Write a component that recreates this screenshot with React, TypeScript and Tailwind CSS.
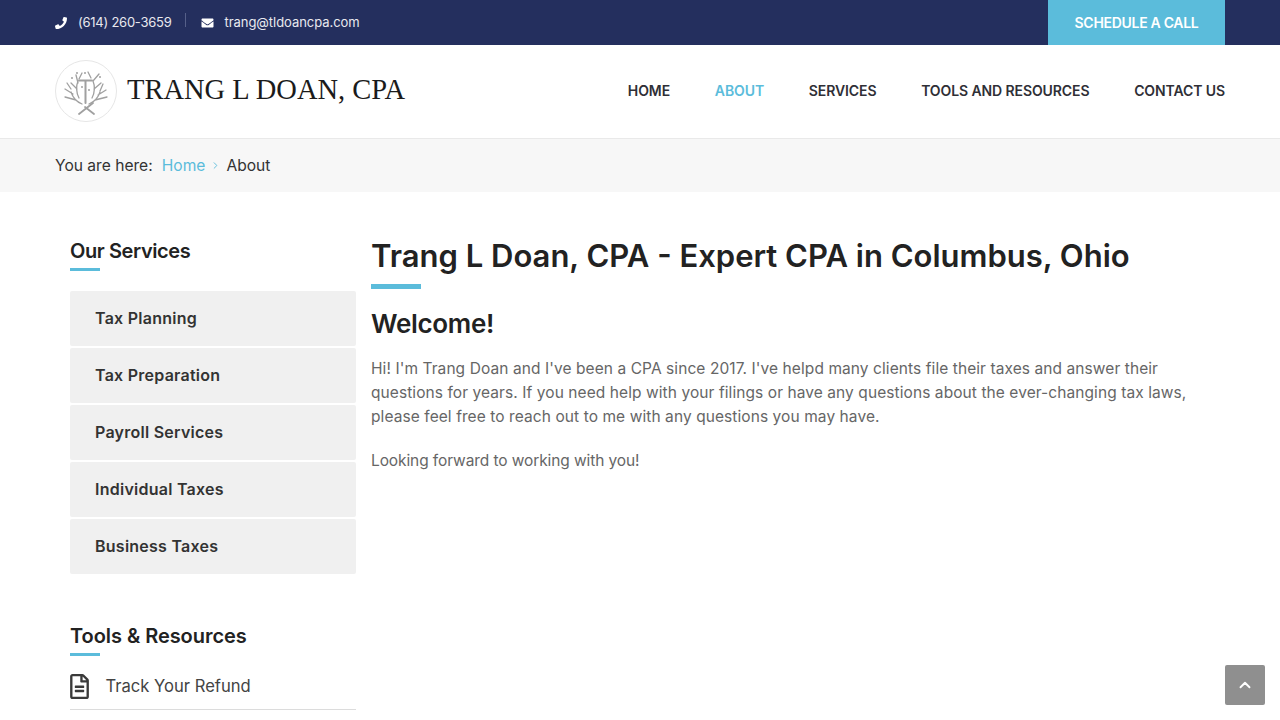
import React from 'react';
import { ChevronUp, ChevronRight } from 'lucide-react';
import { FaPhone, FaEnvelope, FaRegFileAlt } from 'react-icons/fa';

const navLinks = ['HOME', 'ABOUT', 'SERVICES', 'TOOLS AND RESOURCES', 'CONTACT US'];
const services = ['Tax Planning', 'Tax Preparation', 'Payroll Services', 'Individual Taxes', 'Business Taxes'];

const Logo = () => (
  <div className="flex items-center gap-[10px]">
    <svg width="62" height="62" viewBox="0 0 62 62" fill="none">
      <circle cx="31" cy="31" r="30.5" stroke="#e6e6e6" />
      <g stroke="#a0a0a0" strokeWidth="1.3" strokeLinecap="round">
        <path d="M24 20.5h13M30.5 21v22" strokeWidth="2" />
        <path d="M24 54l14-11M39 54l-9-7" strokeWidth="1.8" />
        <path d="M27 44c-5-2-9-6-11-12M21 40l-11-3M18 34l-8-5M16 29l-4-6M24 38c-3-6-3-12-1-17M22 29l-6-6M23 23l-2-8M24 19l3-6" />
        <path d="M34 44c5-2 9-6 11-12M40 40l12-3M43 35l8-5M45 31l3-7M37 38c3-6 3-12 1-17M39 29l7-6M38 21l6-7M36 18l-3-6" />
      </g>
      <g fill="#a0a0a0">
        <circle cx="17" cy="18" r="1" />
        <circle cx="22" cy="13" r="1" />
        <circle cx="30" cy="13" r="1" />
        <circle cx="45" cy="17" r="1" />
        <circle cx="34" cy="30" r="1" />
        <circle cx="27" cy="27" r="1" />
      </g>
    </svg>
    <span className="font-['Liberation_Serif',serif] text-[28.5px] leading-none text-[#1b1b1b] whitespace-nowrap">
      TRANG L DOAN, CPA
    </span>
  </div>
);

const Heading = ({ children }: { children: React.ReactNode }) => (
  <div>
    <h3 className="text-[20px] leading-[24px] font-semibold text-[#222]">{children}</h3>
    <div className="mt-[5px] h-[3px] w-[30px] bg-[#5bbcdb]" />
  </div>
);

export default function App() {
  return (
    <div className="relative h-[720px] overflow-hidden bg-white font-['Inter','Noto_Sans',sans-serif]">
      {/* top bar */}
      <div className="flex h-[45px] items-stretch justify-between bg-[#242f5e] pl-[55px] pr-[55px]">
        <div className="flex items-center text-[13px] text-[#e8e9ef]">
          <FaPhone className="h-[12px] w-[12px] text-white" />
          <span className="ml-[11px] tracking-[-0.25px]">(614) 260-3659</span>
          <div className="ml-[14px] mb-[6px] h-[14px] w-px bg-[#566089]" />
          <FaEnvelope className="ml-[15px] h-[12px] w-[13px] text-white" />
          <span className="ml-[10px] tracking-[-0.05px]">trang@tldoancpa.com</span>
        </div>
        <a className="flex w-[177px] items-center justify-center bg-[#5bbcdb] text-[14px] font-semibold tracking-[-0.3px] text-white">
          SCHEDULE A CALL
        </a>
      </div>

      {/* header */}
      <div className="flex h-[94px] items-center justify-between border-b border-[#e9e9e9] px-[55px] pb-[2px]">
        <Logo />
        <nav className="flex items-center gap-[44.75px]">
          {navLinks.map((link) => (
            <a
              key={link}
              className={`text-[14px] font-semibold tracking-[-0.1px] ${link === 'ABOUT' ? 'text-[#5bbcdb]' : 'text-[#2f2f36]'}`}
            >
              {link}
            </a>
          ))}
        </nav>
      </div>

      {/* breadcrumb */}
      <div className="flex h-[53px] items-center bg-[#f7f7f7] px-[55px] text-[15.6px] text-[#333]">
        <span>You are here:</span>
        <span className="ml-[9px] text-[#5bbcdb]">Home</span>
        <ChevronRight className="ml-[5px] h-[11px] w-[11px] text-[#5bbcdb]" />
        <span className="ml-[5px]">About</span>
      </div>

      {/* content */}
      <div className="flex pl-[70px] pr-[90px] pt-[47px]">
        <aside className="w-[286px] shrink-0">
          <Heading>
            <span className="tracking-[-0.4px]">Our Services</span>
          </Heading>
          <ul className="mt-[20px] flex flex-col gap-[2px]">
            {services.map((s) => (
              <li
                key={s}
                className="flex h-[55px] items-center rounded-[2px] bg-[#f0f0f0] pb-[2px] pl-[25px] text-[16px] font-semibold tracking-[0.25px] text-[#333]"
              >
                {s}
              </li>
            ))}
          </ul>

          <div className="mt-[50px]">
            <Heading>
              <span className="tracking-[-0.05px]">Tools &amp; Resources</span>
            </Heading>
          </div>
          <div className="mt-[9px] flex h-[45px] items-center border-b border-[#dcdcdc] pb-[2px]">
            <FaRegFileAlt className="h-[25px] w-[19px] text-[#3a3a3a]" />
            <span className="ml-[16.5px] text-[16.6px] text-[#444]">Track Your Refund</span>
          </div>
        </aside>

        <main className="ml-[15px] min-w-0 flex-1">
          <h1 className="mt-[-1px] text-[31px] leading-[36px] font-semibold text-[#222]">
            Trang L Doan, CPA - Expert CPA in Columbus, Ohio
          </h1>
          <div className="mt-[10px] h-[5px] w-[50px] bg-[#5bbcdb]" />
          <h2 className="mt-[19px] text-[26px] leading-[32px] font-semibold tracking-[-0.3px] text-[#222]">Welcome!</h2>
          <p className="mt-[17px] text-[15.5px] leading-[24px] tracking-[0.08px] text-[#666]">
            Hi! I'm Trang Doan and I've been a CPA since 2017. I've helpd many clients file their taxes and answer their
            questions for years. If you need help with your filings or have any questions about the ever-changing tax
            laws, please feel free to reach out to me with any questions you may have.
          </p>
          <p className="mt-[20px] text-[15.5px] leading-[24px] tracking-[-0.1px] text-[#666]">
            Looking forward to working with you!
          </p>
        </main>
      </div>

      {/* back to top */}
      <a className="fixed bottom-[15px] right-[15px] flex h-[40px] w-[40px] items-center justify-center rounded-[2px] bg-[#8f8f8f] text-white">
        <ChevronUp className="h-[18px] w-[18px]" strokeWidth={2.5} />
      </a>
    </div>
  );
}
